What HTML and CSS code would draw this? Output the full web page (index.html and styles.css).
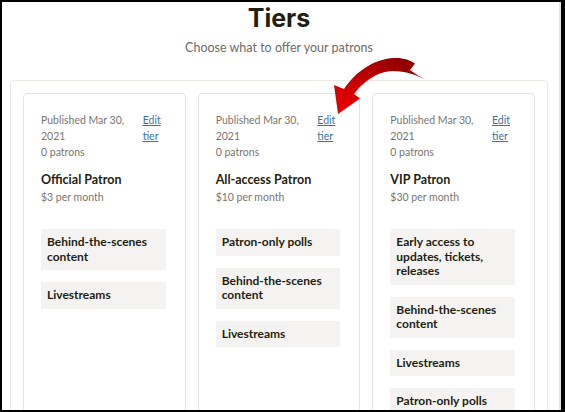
FILE: index.html
```html
<!DOCTYPE html>
<html>
<head>
<meta charset="utf-8">
<link rel="stylesheet" href="styles.css">
</head>
<body>
<div class="frame">
  <div class="page">
    <header class="head">
      <h1 class="title">Tiers</h1>
      <p class="subtitle">Choose what to offer your patrons</p>
    </header>
    <section class="tiers">
      <article class="card">
        <div class="card-top">
          <div class="meta">Published Mar 30, 2021<br>0 patrons</div>
          <a class="edit" href="#">Edit tier</a>
        </div>
        <h2 class="tier-name">Official Patron</h2>
        <div class="price">$3 per month</div>
        <ul class="perks">
          <li class="perk">Behind-the-scenes content</li>
          <li class="perk">Livestreams</li>
        </ul>
      </article>
      <article class="card">
        <div class="card-top">
          <div class="meta">Published Mar 30, 2021<br>0 patrons</div>
          <a class="edit" href="#">Edit tier</a>
        </div>
        <h2 class="tier-name">All-access Patron</h2>
        <div class="price">$10 per month</div>
        <ul class="perks">
          <li class="perk">Patron-only polls</li>
          <li class="perk">Behind-the-scenes content</li>
          <li class="perk">Livestreams</li>
        </ul>
      </article>
      <article class="card">
        <div class="card-top">
          <div class="meta">Published Mar 30, 2021<br>0 patrons</div>
          <a class="edit" href="#">Edit tier</a>
        </div>
        <h2 class="tier-name">VIP Patron</h2>
        <div class="price">$30 per month</div>
        <ul class="perks">
          <li class="perk">Early access to updates, tickets, releases</li>
          <li class="perk">Behind-the-scenes content</li>
          <li class="perk">Livestreams</li>
          <li class="perk">Patron-only polls</li>
        </ul>
      </article>
    </section>
  </div>
  <svg class="arrow" width="115" height="65" viewBox="0 0 115 65">
    <defs>
      <linearGradient id="ag" x1="1" y1="0" x2="0" y2="1">
        <stop offset="0" stop-color="#7a0000"/>
        <stop offset="0.45" stop-color="#b80000"/>
        <stop offset="1" stop-color="#f00000"/>
      </linearGradient>
    </defs>
    <path fill="url(#ag)" d="M18 59 L14 30 L24 34 C34 19 52 4 74 3 C83 2.5 90 5 95 8.5 L90 15 C95 19 101 22 107 25.5 C97 20 86 16 72 16 C56 17 43 27 34 39 L40 43.5 Z"/>
  </svg>
</div>
</body>
</html>
```

FILE: styles.css
```css
* { box-sizing: border-box; }
html, body { margin: 0; padding: 0; background: #fff; }
body { font-family: Lato, "Noto Sans", sans-serif; color: #241e12; }

.frame {
  position: relative;
  width: 565px;
  height: 412px;
  overflow: hidden;
  border: 2px solid #000;
  border-right-width: 4px;
  background: #fff;
}
.frame::after {
  content: "";
  position: absolute;
  top: 0; right: 0; bottom: 0;
  width: 2px;
  background: #e4e4e4;
}

.page { padding: 0 13px 0 8px; }

.head { text-align: center; }
.title {
  margin: 0;
  font-family: Inter, sans-serif;
  font-size: 25px;
  line-height: 32px;
  font-weight: 700;
  color: #241e12;
}
.subtitle {
  margin: 6px 0 0;
  font-size: 12.5px;
  line-height: 16px;
  color: #6f6b66;
}

.tiers {
  margin-top: 24px;
  border: 1px solid #ebe9e4;
  border-radius: 4px;
  padding: 12px 12px 0;
  display: grid;
  grid-template-columns: repeat(3, 1fr);
  gap: 12px;
  align-items: start;
}

.card {
  border: 1px solid #e6e4df;
  border-radius: 4px;
  padding: 18px 19px 18px 17px;
  min-height: 340px;
}

.card-top {
  display: grid;
  grid-template-columns: 1fr 23px;
  gap: 8px;
  font-size: 10.5px;
  line-height: 16px;
}
.meta { color: #7a7570; }
.edit {
  color: #3d6fa3;
  text-decoration: underline;
}

.tier-name {
  margin: 11px 0 0;
  font-size: 12.5px;
  line-height: 18px;
  font-weight: 700;
}
.price {
  font-size: 10.5px;
  line-height: 16px;
  color: #7a7570;
}

.perks {
  list-style: none;
  margin: 24px 0 0;
  padding: 0;
  display: flex;
  flex-direction: column;
  gap: 12px;
}
.perk {
  background: #f4f3f1;
  padding: 6px 6px;
  font-size: 12px;
  line-height: 14.5px;
  font-weight: 700;
  color: #241e12;
}

.arrow {
  position: absolute;
  left: 318px;
  top: 53px;
}
```
